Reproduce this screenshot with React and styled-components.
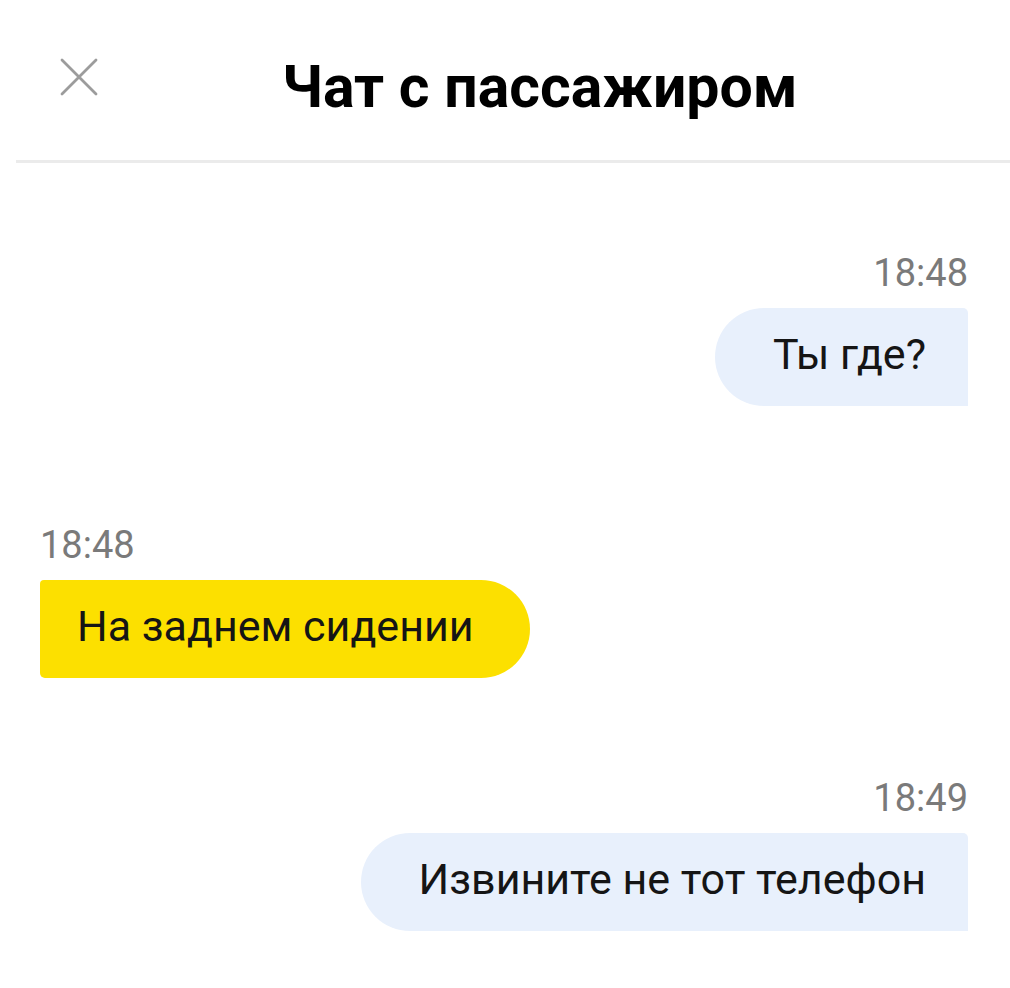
import styled, { createGlobalStyle } from "styled-components";

const GlobalStyle = createGlobalStyle`
  html, body {
    margin: 0;
    padding: 0;
    background: #ffffff;
  }
  body {
    font-family: Roboto, "Liberation Sans", sans-serif;
    color: #111111;
  }
`;

const Screen = styled.div`
  width: 1010px;
  height: 988px;
  background: #ffffff;
  overflow: hidden;
`;

const Header = styled.div`
  height: 160px;
  box-sizing: border-box;
  display: flex;
  align-items: flex-start;
  padding: 57px 0 0 60px;
`;

const CloseButton = styled.div`
  width: 38px;
  height: 38px;
  margin-top: 1px;
  flex: none;
`;

const Title = styled.h1`
  margin: 0 0 0 184px;
  font-size: 59px;
  line-height: 59px;
  font-weight: 700;
  letter-spacing: 0;
  color: #000000;
`;

const Divider = styled.div`
  height: 3px;
  margin-left: 16px;
  background: #ebebeb;
`;

const Messages = styled.div`
  display: flex;
  flex-direction: column;
  padding: 0 42px 0 40px;
`;

const Group = styled.div`
  display: flex;
  flex-direction: column;
  align-items: ${(p) => (p.$out ? "flex-end" : "flex-start")};
  margin-top: ${(p) => p.$top}px;
  gap: 16px;
`;

const Time = styled.div`
  font-size: 38px;
  line-height: 38px;
  color: #7a7a7a;
`;

const Bubble = styled.div`
  height: 98px;
  box-sizing: border-box;
  display: flex;
  align-items: center;
  font-size: 43px;
  line-height: 43px;
  color: #151515;
  background: ${(p) => (p.$out ? "#e8f0fc" : "#fce000")};
  padding: ${(p) => (p.$out ? "0 42px 6px 58px" : "0 56px 6px 37px")};
  border-radius: ${(p) => (p.$out ? "49px 5px 0 49px" : "4px 50px 50px 5px")};
`;

const messages = [
  { out: true, top: 91, time: "18:48", text: "Ты где?" },
  { out: false, top: 120, time: "18:48", text: "На заднем сидении" },
  { out: true, top: 101, time: "18:49", text: "Извините не тот телефон" },
];

const App = () => {
  return (
    <Screen>
      <GlobalStyle />
      <Header>
        <CloseButton>
          <svg width="38" height="38" viewBox="0 0 38 38">
            <path
              d="M2 2 L36 36 M36 2 L2 36"
              stroke="#9c9c9c"
              strokeWidth="2.8"
              strokeLinecap="round"
              fill="none"
            />
          </svg>
        </CloseButton>
        <Title>Чат с пассажиром</Title>
      </Header>
      <Divider />
      <Messages>
        {messages.map((m, i) => (
          <Group key={i} $out={m.out} $top={m.top}>
            <Time>{m.time}</Time>
            <Bubble $out={m.out}>{m.text}</Bubble>
          </Group>
        ))}
      </Messages>
    </Screen>
  );
};

export default App;
